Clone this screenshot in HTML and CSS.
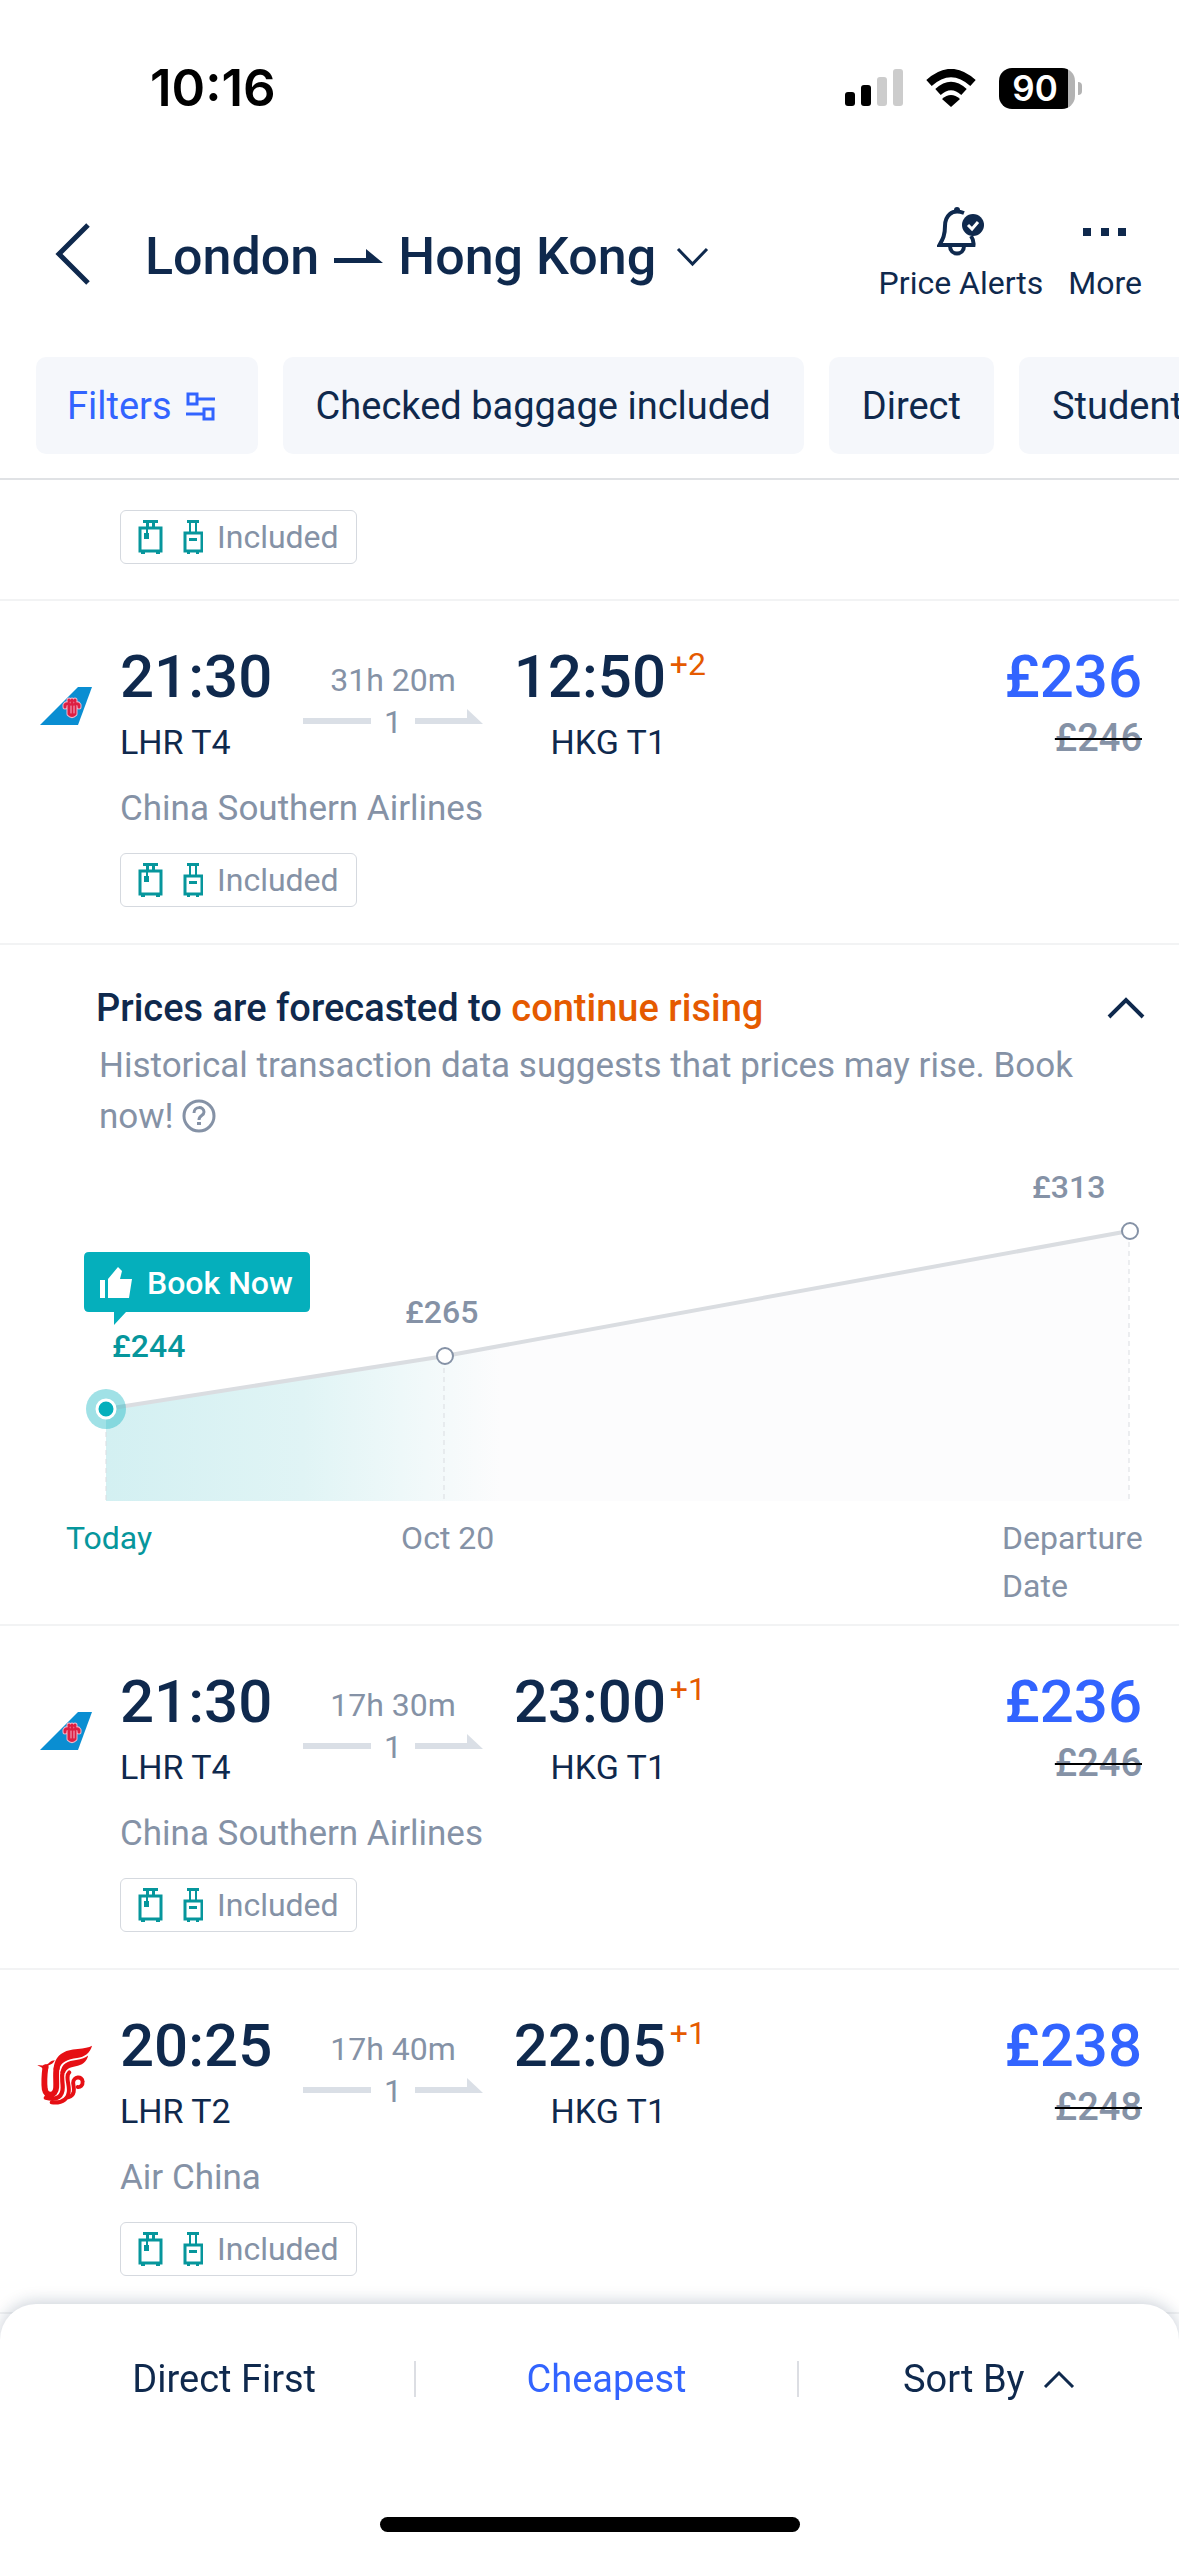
FILE: index.html
```html
<!DOCTYPE html>
<html lang="en">
<head>
<meta charset="utf-8">
<meta name="viewport" content="width=device-width, initial-scale=1">
<title>London to Hong Kong flights</title>
<link rel="stylesheet" href="styles.css">
</head>
<body>
<svg class="sprite" aria-hidden="true">
  <symbol id="suitcase" viewBox="0 0 26 34">
    <path d="M5 0H20V3H5ZM8 3H11V7H8ZM14 3H17V7H14ZM3 32H7V34H3ZM18 32H22V34H18Z" fill="currentColor"/>
    <path d="M2 8H23V31H2Z" fill="none" stroke="currentColor" stroke-width="3"/>
    <path d="M8 7H10V13H11V19H6V13H8Z" fill="currentColor"/>
  </symbol>
  <symbol id="cabin-bag" viewBox="0 0 20 34">
    <path d="M4 0H16V3H4ZM6 3H8V12H6ZM12 3H14V12H12ZM4 32H7V34H4ZM13 32H16V34H13ZM6 18H14V21H6Z" fill="currentColor"/>
    <path d="M2 13H19V31H2Z" fill="none" stroke="currentColor" stroke-width="3"/>
  </symbol>
  <symbol id="arrow-line" viewBox="0 0 68 28">
    <path d="M0 10H52V1L68 16H0Z" fill="currentColor"/>
  </symbol>
  <symbol id="plain-line" viewBox="0 0 68 28">
    <path d="M0 10H68V16H0Z" fill="currentColor"/>
  </symbol>
  <symbol id="china-southern" viewBox="0 0 52 40">
    <path d="M38 1H52L38 39H0Z" fill="#0a8ed2"/>
    <g fill="none" stroke-linecap="round" stroke-linejoin="round">
      <path id="kapok" d="M25 21V19Q26 17 29 18V28Q32 31 35 28V18Q38 17 39 19V21M29 15V14M32 14V29M35 15V14" stroke="#efb6cc" stroke-width="5"/>
      <path d="M25 21V19Q26 17 29 18V28Q32 31 35 28V18Q38 17 39 19V21M29 15V14M32 14V29M35 15V14" stroke="#dd1f42" stroke-width="3"/>
      <path d="M31 20V27M34 20V27" stroke="#efb6cc" stroke-width="1"/>
    </g>
  </symbol>
  <symbol id="air-china" viewBox="36 40 170 184">
    <g fill="#e60f14">
      <path d="M36 101L52 103C60 103 70 98 74 93C78 89 84 88 90 87C86 95 80 100 70 103V112H52C50 106 42 106 36 101Z"/>
      <path d="M86 116C88 70 120 54 160 52C180 50 194 48 204 42C198 64 182 76 158 80C130 84 106 92 104 116Z"/>
      <path d="M107 126C110 96 130 89 155 86C172 83 184 79 192 72C188 92 172 102 154 105C136 108 124 114 121 126Z"/>
    </g>
    <g fill="none" stroke="#e60f14" stroke-linecap="round">
      <path d="M61 108C58 130 57 160 59 176C63 200 92 198 94 170C95 150 92 130 95 112" stroke-width="18"/>
      <path d="M62 202C98 212 114 196 114 170C114 150 109 138 114 122" stroke-width="13"/>
      <path d="M80 216C116 220 133 202 133 178C133 156 122 136 134 124" stroke-width="12"/>
      <path d="M132 200C156 192 147 168 146 156C146 136 174 134 175 152C176 164 168 170 160 169" stroke-width="12"/>
    </g>
  </symbol>
</svg>

<div class="status-bar">
  <span class="clock">10:16</span>
  <span class="status-icons">
    <svg width="58" height="38" viewBox="0 0 58 38" aria-hidden="true">
      <rect x="0" y="23" width="10" height="14" rx="3"/><rect x="16" y="16" width="10" height="21" rx="3"/>
      <rect x="32" y="8" width="10" height="29" rx="3" fill="#ccc"/><rect x="48" y="0" width="10" height="37" rx="3" fill="#ccc"/>
    </svg>
    <svg width="52" height="38" viewBox="0 0 52 38" aria-hidden="true">
      <path d="M4 14Q26 -6 48 14M13 23Q26 11 39 23" fill="none" stroke="#000" stroke-width="8"/>
      <path d="M17 30Q26 22 35 30L26 38Z"/>
    </svg>
    <span class="battery">90</span>
  </span>
</div>

<header class="header">
  <button class="back" aria-label="Back">
    <svg width="36" height="62" viewBox="0 0 36 62"><path d="M33 2L4 31L33 60" fill="none" stroke="currentColor" stroke-width="5"/></svg>
  </button>
  <button class="route-title">
    <span>London</span>
    <svg width="49" height="15" viewBox="0 0 49 15" aria-label="to"><path d="M0 9H32V0L49 14H0Z" fill="currentColor"/></svg>
    <span>Hong Kong</span>
    <svg class="title-chevron" width="33" height="20" viewBox="0 0 33 20" aria-hidden="true"><path d="M2 2L16.500 17L31 2" fill="none" stroke="currentColor" stroke-width="3"/></svg>
  </button>
  <nav class="actions">
    <button class="action">
      <svg width="48" height="52" viewBox="0 0 48 52" aria-hidden="true">
        <path d="M27 8C14 3 8 12 8 21C8 30 6 34 2.500 40H36.500C37 36 36 34 34 31" fill="none" stroke="currentColor" stroke-width="4"/>
        <rect x="17" y="2" width="6" height="6" rx="3" fill="currentColor"/>
        <path d="M13 41C13 51 27 51 27 41" fill="none" stroke="currentColor" stroke-width="4"/>
        <circle cx="36" cy="20" r="11" fill="currentColor"/>
        <path d="M31 20L35 24L41 17" fill="none" stroke="#fff" stroke-width="3"/>
      </svg>
      <span>Price Alerts</span>
    </button>
    <button class="action">
      <svg width="44" height="52" viewBox="0 0 44 52" aria-hidden="true"><path d="M0 23H8V31H0ZM18 23H26V31H18ZM35 23H43V31H35Z" fill="currentColor"/></svg>
      <span>More</span>
    </button>
  </nav>
</header>

<div class="chips">
  <button class="chip chip-filters">Filters
    <svg width="29" height="29" viewBox="0 0 29 29" aria-hidden="true"><path d="M2 2H11V12H2ZM18 17H27V27H18ZM12 7H29M0 22H18" fill="none" stroke="currentColor" stroke-width="3"/></svg>
  </button>
  <button class="chip">Checked baggage included</button>
  <button class="chip">Direct</button>
  <button class="chip">Student</button>
</div>

<main class="results">
  <article class="flight flight-partial">
    <div class="baggage"><svg class="suitcase"><use href="#suitcase"/></svg><svg class="cabin"><use href="#cabin-bag"/></svg>Included</div>
  </article>

  <article class="flight">
    <svg class="logo" role="img" aria-label="China Southern"><use href="#china-southern"/></svg>
    <div class="itinerary">
      <div class="stop"><div class="time">21:30</div><div class="airport">LHR T4</div></div>
      <div class="leg"><div class="duration">31h 20m</div><div class="track"><svg><use href="#plain-line"/></svg>1<svg><use href="#arrow-line"/></svg></div></div>
      <div class="stop arrival"><div class="time">12:50</div><div class="airport">HKG T1</div></div>
      <div class="days">+2</div>
    </div>
    <div class="fare"><div class="price">£236</div><s class="old-price">£246</s></div>
    <div class="airline">China Southern Airlines</div>
    <div class="baggage"><svg class="suitcase"><use href="#suitcase"/></svg><svg class="cabin"><use href="#cabin-bag"/></svg>Included</div>
  </article>

  <section class="forecast">
    <div class="forecast-head">
      <h2>Prices are forecasted to <em>continue rising</em></h2>
      <button class="collapse" aria-label="Collapse">
        <svg width="38" height="22" viewBox="0 0 38 22"><path d="M2 20L19 3L36 20" fill="none" stroke="currentColor" stroke-width="4"/></svg>
      </button>
    </div>
    <p class="forecast-text">Historical transaction data suggests that prices may rise. Book now!
      <svg class="help" width="34" height="34" viewBox="0 0 34 34" role="img" aria-label="Help"><circle cx="17" cy="17" r="15" fill="none" stroke="currentColor" stroke-width="3"/><path d="M12 14C12 7 22 7 22 13C22 17 17 16 17 21" fill="none" stroke="currentColor" stroke-width="3"/><rect x="15" y="23" width="4" height="3" fill="currentColor"/></svg>
    </p>
    <svg class="chart" viewBox="0 0 1179 372" role="img" aria-label="Price forecast chart">
      <defs>
        <linearGradient id="now-fill" gradientUnits="userSpaceOnUse" x1="106" y1="0" x2="500" y2="0">
          <stop offset="0" stop-color="#d3f0f2"/><stop offset=".5" stop-color="#e0f4f5"/><stop offset="1" stop-color="#fcfcfd"/>
        </linearGradient>
      </defs>
      <path d="M106 267L445 214L1129 89V359H106Z" fill="#fcfcfd"/>
      <path d="M106 267L445 214L500 204V359H106Z" fill="url(#now-fill)"/>
      <path d="M106 267L445 214L1129 89" fill="none" stroke="#dadde1" stroke-width="4"/>
      <path d="M106 290V359M444 226V359M1129 100V359" stroke="#dadde1" stroke-width="1" stroke-dasharray="5 4"/>
      <circle cx="106" cy="267" r="20" fill="#05afbc" fill-opacity=".38"/>
      <circle cx="106" cy="267" r="9" fill="#05afbc" stroke="#fff" stroke-width="3"/>
      <circle cx="445" cy="214" r="8" fill="#fff" stroke="#8592a6" stroke-width="2"/>
      <circle cx="1130" cy="89" r="8" fill="#fff" stroke="#8592a6" stroke-width="2"/>
      <path d="M89 110H305Q310 110 310 115V165Q310 170 305 170H126L114 183V170H89Q84 170 84 165V115Q84 110 89 110Z" fill="#05afbc"/>
      <path d="M100 138H105V156H100ZM108 156V137L118 125L122 129L120 137H132L129 156Z" fill="#fff"/>
      <text class="chart-text tag-text" x="147" y="152">Book Now</text>
      <text class="chart-text now-text" x="112" y="215">£244</text>
      <text class="chart-text" x="405" y="181">£265</text>
      <text class="chart-text" x="1032" y="56">£313</text>
    </svg>
    <div class="axis"><span class="today">Today</span><span class="mid">Oct 20</span><span class="end">Departure Date</span></div>
  </section>

  <article class="flight">
    <svg class="logo" role="img" aria-label="China Southern"><use href="#china-southern"/></svg>
    <div class="itinerary">
      <div class="stop"><div class="time">21:30</div><div class="airport">LHR T4</div></div>
      <div class="leg"><div class="duration">17h 30m</div><div class="track"><svg><use href="#plain-line"/></svg>1<svg><use href="#arrow-line"/></svg></div></div>
      <div class="stop arrival"><div class="time">23:00</div><div class="airport">HKG T1</div></div>
      <div class="days">+1</div>
    </div>
    <div class="fare"><div class="price">£236</div><s class="old-price">£246</s></div>
    <div class="airline">China Southern Airlines</div>
    <div class="baggage"><svg class="suitcase"><use href="#suitcase"/></svg><svg class="cabin"><use href="#cabin-bag"/></svg>Included</div>
  </article>

  <article class="flight">
    <svg class="logo logo-tall" role="img" aria-label="Air China"><use href="#air-china"/></svg>
    <div class="itinerary">
      <div class="stop"><div class="time">20:25</div><div class="airport">LHR T2</div></div>
      <div class="leg"><div class="duration">17h 40m</div><div class="track"><svg><use href="#plain-line"/></svg>1<svg><use href="#arrow-line"/></svg></div></div>
      <div class="stop arrival"><div class="time">22:05</div><div class="airport">HKG T1</div></div>
      <div class="days">+1</div>
    </div>
    <div class="fare"><div class="price">£238</div><s class="old-price">£248</s></div>
    <div class="airline">Air China</div>
    <div class="baggage"><svg class="suitcase"><use href="#suitcase"/></svg><svg class="cabin"><use href="#cabin-bag"/></svg>Included</div>
  </article>
</main>

<footer class="sort-bar">
  <div class="sort-options">
    <button>Direct First</button>
    <button class="active">Cheapest</button>
    <button>Sort By
      <svg width="32" height="18" viewBox="0 0 32 18" aria-hidden="true"><path d="M2 17L16 3L30 17" fill="none" stroke="currentColor" stroke-width="3"/></svg>
    </button>
  </div>
  <div class="home-indicator"></div>
</footer>
</body>
</html>
```

FILE: styles.css
```css
:root {
  --navy: #0f294d;
  --blue: #3264ff;
  --grey: #8592a6;
  --teal: #06969c;
  --orange: #e55a00;
  --line: #dadfe6;
}

* { box-sizing: border-box; }

body {
  margin: 0;
  background: #fff;
  color: var(--navy);
  font-family: Roboto, "Liberation Sans", sans-serif;
  font-size: 32px;
  line-height: 40px;
}

button {
  padding: 0;
  border: 0;
  background: none;
  color: inherit;
  font: inherit;
  white-space: nowrap;
}

svg { display: block; flex: none; }
.sprite { display: none; }

/* Status bar */
.status-bar {
  display: flex;
  justify-content: space-between;
  align-items: center;
  padding: 57px 104px 0 150px;
  color: #000;
  font-family: Inter, "Liberation Sans", sans-serif;
  font-weight: 600;
}
.clock { font-size: 51px; line-height: 62px; }
.status-icons { display: flex; align-items: center; gap: 22px; }
.battery {
  position: relative;
  width: 76px;
  height: 41px;
  border-radius: 13px;
  background: linear-gradient(90deg, #000 69px, #b3b3b3 69px);
  color: #fff;
  font-size: 35px;
  line-height: 41px;
  text-align: center;
  padding-right: 4px;
}
.battery::after {
  content: "";
  position: absolute;
  left: 79px;
  top: 14px;
  width: 4px;
  height: 13px;
  border-radius: 0 4px 4px 0;
  background: #b3b3b3;
}

/* Header */
.header {
  display: flex;
  align-items: center;
  padding: 86px 37px 0 55px;
}
.route-title {
  display: flex;
  align-items: center;
  gap: 15px;
  margin-left: 54px;
  padding-top: 5px;
  font-size: 52px;
  font-weight: 500;
  line-height: 64px;
}
.title-chevron { margin-left: 5px; }
.actions { display: flex; gap: 25px; margin-left: auto; }
.action {
  display: flex;
  flex-direction: column;
  align-items: center;
  gap: 6px;
}

/* Filter chips */
.chips {
  display: flex;
  gap: 25px;
  padding: 54px 0 24px 36px;
  border-bottom: 2px solid #e0e2e5;
  overflow: hidden;
}
.chip {
  display: flex;
  align-items: center;
  gap: 14px;
  flex: none;
  padding: 25px 33px 23px;
  border-radius: 10px;
  background: #f5f7fb;
  font-size: 38px;
  line-height: 49px;
}
.chip-filters { padding-left: 31px; padding-right: 43px; color: var(--blue); }

/* Flight rows */
.results { padding-bottom: 244px; }
.flight {
  display: grid;
  grid-template-columns: 80px 1fr auto;
  padding: 46px 37px 36px 40px;
  border-bottom: 2px solid #f2f3f4;
}
.flight-partial { padding-top: 30px; padding-bottom: 35px; }
.flight > .airline, .flight > .baggage { grid-column: 2 / -1; }
.logo { width: 52px; height: 40px; align-self: center; }
.logo-tall { width: 56px; height: 60px; margin-left: -3px; }
.itinerary { display: flex; }
.stop { width: 183px; }
.arrival { text-align: right; }
.time, .price {
  font-size: 60px;
  font-weight: 500;
  line-height: 60px;
}
.airport { margin-top: 13px; font-size: 34px; line-height: 44px; }
.leg {
  width: 180px;
  padding-top: 13px;
  color: var(--grey);
  text-align: center;
}
.track {
  display: flex;
  justify-content: space-between;
  align-items: center;
  margin-top: 2px;
}
.track svg { width: 68px; height: 28px; color: var(--line); }
.days {
  width: 40px;
  color: var(--orange);
  line-height: 34px;
  text-align: right;
}
.fare { text-align: right; }
.price { color: var(--blue); }
.old-price {
  display: block;
  margin-top: 9px;
  color: var(--grey);
  font-size: 38px;
  font-weight: 500;
  line-height: 44px;
  text-decoration: line-through 2px #000;
}
.airline {
  margin-top: 23px;
  color: var(--grey);
  font-size: 35px;
  line-height: 44px;
}
.baggage {
  display: flex;
  align-items: center;
  justify-self: start;
  height: 54px;
  padding: 0 17px;
  border: 1px solid #d5d9df;
  border-radius: 6px;
  color: var(--grey);
}
.airline + .baggage { margin-top: 22px; }
.baggage svg { color: var(--teal); }
.suitcase { width: 26px; height: 34px; margin-right: 19px; }
.cabin { width: 20px; height: 34px; margin-right: 14px; }

/* Price forecast */
.forecast {
  padding: 39px 0 14px;
  border-bottom: 2px solid #f2f3f4;
}
.forecast-head {
  display: flex;
  justify-content: space-between;
  align-items: center;
  padding: 0 34px 0 96px;
}
.forecast h2 {
  margin: 0;
  font-size: 38px;
  font-weight: 500;
  line-height: 48px;
}
.forecast em { color: var(--orange); font-style: normal; }
.forecast-text {
  margin: 8px 80px 0 99px;
  color: var(--grey);
  font-size: 35px;
  line-height: 51px;
}
.help { display: inline-block; vertical-align: -5px; }
.chart { width: 100%; height: auto; }
.chart-text { fill: var(--grey); font-size: 32px; font-weight: 500; }
.tag-text { fill: #fff; }
.now-text { fill: var(--teal); }
.axis {
  display: flex;
  padding: 0 32px 0 66px;
  color: var(--grey);
  line-height: 48px;
}
.today { flex: 0 0 31%; color: var(--teal); }
.end { width: 145px; margin-left: auto; }

/* Sort bar */
.sort-bar {
  position: fixed;
  left: 0;
  right: 0;
  bottom: 0;
  padding: 57px 0 24px;
  border-radius: 36px 36px 0 0;
  background: #fff;
  box-shadow: 0 -2px 16px rgba(15, 41, 77, 0.22);
}
.sort-options { display: flex; padding-left: 34px; }
.sort-options button {
  display: flex;
  flex: 1;
  justify-content: center;
  align-items: center;
  gap: 18px;
  font-size: 38px;
  line-height: 36px;
}
.sort-options .active {
  border: solid #dcdee3;
  border-width: 0 2px;
  color: var(--blue);
}
.home-indicator {
  width: 420px;
  height: 15px;
  margin: 120px auto 0;
  border-radius: 8px;
  background: #000;
}
```
